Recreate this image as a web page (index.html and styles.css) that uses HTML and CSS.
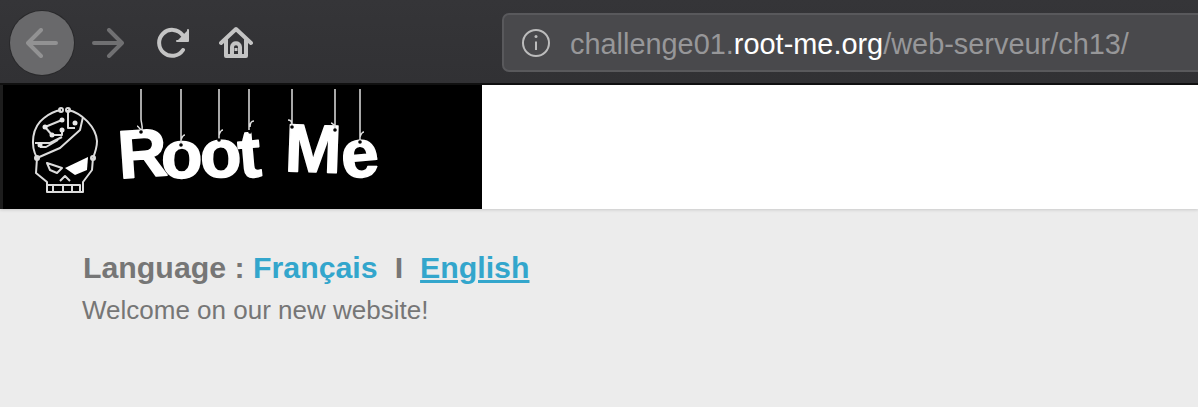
FILE: index.html
```html
<!DOCTYPE html>
<html lang="en">
<head>
    <meta charset="UTF-8">
    <meta name="viewport" content="width=device-width, initial-scale=1.0">
    <title>Root Me</title>
    <link rel="stylesheet" href="styles.css">
</head>
<body>
<div class="toolbar">
    <div class="nav-btn back">
        <svg width="32" height="30" viewBox="0 0 32 30" fill="none" stroke="#929293" stroke-width="4" stroke-linecap="round" stroke-linejoin="round">
            <path d="M2 15H30M15 2L2 15L15 28"/>
        </svg>
    </div>
    <svg class="forward" width="32" height="30" viewBox="0 0 32 30" fill="none" stroke="#707072" stroke-width="4" stroke-linecap="round" stroke-linejoin="round">
        <path d="M2 15H30M17 2L30 15L17 28"/>
    </svg>
    <svg class="reload" width="34" height="34" viewBox="0 0 34 34" fill="none" stroke="#c4c4c4" stroke-width="4" stroke-linecap="round">
        <path d="M25.500 9A13 13 0 1 0 26 24"/>
        <path d="M31 4V15H20" stroke-linejoin="round" fill="#c4c4c4" stroke-width="2"/>
    </svg>
    <svg class="home" width="34" height="34" viewBox="0 0 34 34" fill="none" stroke="#c4c4c4" stroke-width="4" stroke-linecap="round" stroke-linejoin="round">
        <path d="M2 17L17 3L32 17"/>
        <path d="M7 14V30H27V14"/>
        <path d="M13 30V21C13 16 21 16 21 21V30"/>
        <rect x="15.500" y="22" width="3" height="3" fill="#c4c4c4" stroke="none"/>
    </svg>
    <div class="address">
        <svg width="30" height="30" viewBox="0 0 30 30" fill="none" stroke="#bcbcbc" stroke-width="2">
            <circle cx="15" cy="15" r="13"/>
            <path d="M15 13.500V22"/>
            <circle cx="15" cy="8.500" r="1.500" fill="#bcbcbc" stroke="none"/>
        </svg>
        <span class="url">challenge01.<b>root-me.org</b>/web-serveur/ch13/</span>
    </div>
</div>

<div class="banner">
    <div class="logo">
        <svg width="482" height="124" viewBox="0 0 482 124">
            <!-- skull -->
            <g fill="none" stroke="#dcdcdc" stroke-width="2" stroke-linejoin="round">
                <path d="M37 73C30 60 32 42 44 33C49 29 55 26 61 25M68 25C82 28 96 42 97 56C97 62 95 68 93 73"/>
                <path d="M37 73L36 88L47 97V107H83V97L92 85L93 73"/>
                <path d="M37 73L60 63L80 45L83 32"/>
                <path d="M68 25V43H75"/>
                <path d="M35 58H50L62 52M40 62H46L58 55M45 42L62 35M52 50H62V45M52 50L45 42"/>
                <path d="M53 107V100M63 107V100M72 107V100M80 107V100H47M60 96L65 91L70 96"/>
                <path d="M47 78L62 83L57 88L50 85Z"/>
                <circle cx="61" cy="25" r="2"/>
                <circle cx="68" cy="25" r="2"/>
                <circle cx="37" cy="73" r="2"/>
                <circle cx="93" cy="73" r="2"/>
            </g>
            <g fill="#e8e8e8">
                <circle cx="45" cy="42" r="2.500"/>
                <circle cx="62" cy="35" r="2.500"/>
                <circle cx="52" cy="50" r="2.500"/>
                <circle cx="62" cy="45" r="2.500"/>
                <circle cx="40" cy="60" r="2.500"/>
                <circle cx="75" cy="38" r="2.500"/>
            </g>
            <path d="M65 83L88 72L87 85L75 90Z" fill="#fff"/>
            <!-- letters -->
            <g class="letters">
                <text x="118" y="92" transform="rotate(-4 140 70)">R</text>
                <text x="161" y="93">o</text>
                <text x="200" y="92" transform="rotate(-3 219 75)">o</text>
                <text x="238" y="92" transform="rotate(-5 250 70)">t</text>
                <text x="285" y="87" transform="rotate(2 312 62)">M</text>
                <text x="341" y="92" transform="rotate(-5 360 72)">e</text>
            </g>
            <!-- strings -->
            <g fill="none" stroke="#e0e0e0" stroke-width="1.500">
                <path d="M141 4V34C141 38 143 40 142 46C140 44 138 41 137 41"/>
                <path d="M181 4V59M181 55C182 52 183 50 185 50"/>
                <path d="M219 4V54M219 50C220 47 221 45 223 45"/>
                <path d="M249 4V45M250 42C250 38 252 36 254 36"/>
                <path d="M292 4V40C292 36 290 35 288 35"/>
                <path d="M335 4V44C335 40 332 38 331 38"/>
                <path d="M360 4V55M360 52C361 49 362 47 364 47"/>
            </g>
            <g fill="#000">
                <circle cx="141" cy="47" r="1.800"/>
                <circle cx="181" cy="60" r="1.800"/>
                <circle cx="219" cy="55" r="1.800"/>
                <circle cx="250" cy="47" r="1.800"/>
                <circle cx="292" cy="42" r="1.800"/>
                <circle cx="335" cy="45" r="1.800"/>
                <circle cx="360" cy="57" r="1.800"/>
            </g>
        </svg>
    </div>
</div>

<div class="content">
    <p class="lang">Language : <a href="#">Français</a><span class="sep">I</span><a href="#" class="active">English</a></p>
    <p class="welcome">Welcome on our new website!</p>
</div>
</body>
</html>
```

FILE: styles.css
```css
html, body {
    width: 100%;
    height: 100%;
}

body {
    margin: 0;
    padding: 0;
    overflow: hidden;
    background-color: #ececec;
    font-family: "Liberation Sans", Arial, sans-serif;
}

.toolbar {
    display: flex;
    align-items: center;
    height: 85px;
    padding: 2px 0 0 10px;
    box-sizing: border-box;
    background: linear-gradient(#353538, #313134);
    border-bottom: 2px solid #111;
}

.nav-btn {
    display: flex;
    align-items: center;
    justify-content: center;
    width: 64px;
    height: 64px;
    flex: none;
    border-radius: 50%;
    background-color: #69696b;
    box-shadow: 0 0 0 1px #29292b;
}

.forward {
    margin-left: 18px;
}

.reload {
    margin-left: 33px;
}

.home {
    margin-left: 28px;
}

.address {
    display: flex;
    align-items: center;
    gap: 19px;
    height: 59px;
    flex: 1;
    margin-left: 249px;
    margin-right: -20px;
    padding-left: 17px;
    box-sizing: border-box;
    background-color: #49494c;
    border: 2px solid #59595c;
    border-radius: 7px;
}

.url {
    margin-top: 3px;
    font-size: 28.900px;
    color: #979799;
    white-space: nowrap;
}

.url b {
    font-weight: normal;
    color: #fff;
}

.banner {
    height: 124px;
    background-color: #fff;
    box-shadow: 0 1px 3px rgba(0, 0, 0, 0.15);
}

.logo {
    width: 482px;
    height: 124px;
    background-color: #000;
    border-left: 3px solid #1d1d1d;
    box-sizing: border-box;
}

.logo svg {
    display: block;
    margin-left: -3px;
}

.letters text {
    font-family: "Liberation Sans", Arial, sans-serif;
    font-weight: bold;
    font-size: 68px;
    fill: #fff;
    stroke: #fff;
    stroke-width: 1.5px;
    stroke-linejoin: round;
}

.content {
    padding: 41px 0 0 83px;
    color: #767676;
}

.content p {
    margin: 0;
}

.lang {
    font-size: 30.300px;
    font-weight: bold;
    line-height: 36px;
}

.lang a {
    color: #33a6cc;
    text-decoration: none;
}

.lang a.active {
    text-decoration: underline;
}

.sep {
    margin: 0 17px;
}

.welcome {
    margin: 7px 0 0 -1px !important;
    font-size: 26px;
    line-height: 34px;
}
```
